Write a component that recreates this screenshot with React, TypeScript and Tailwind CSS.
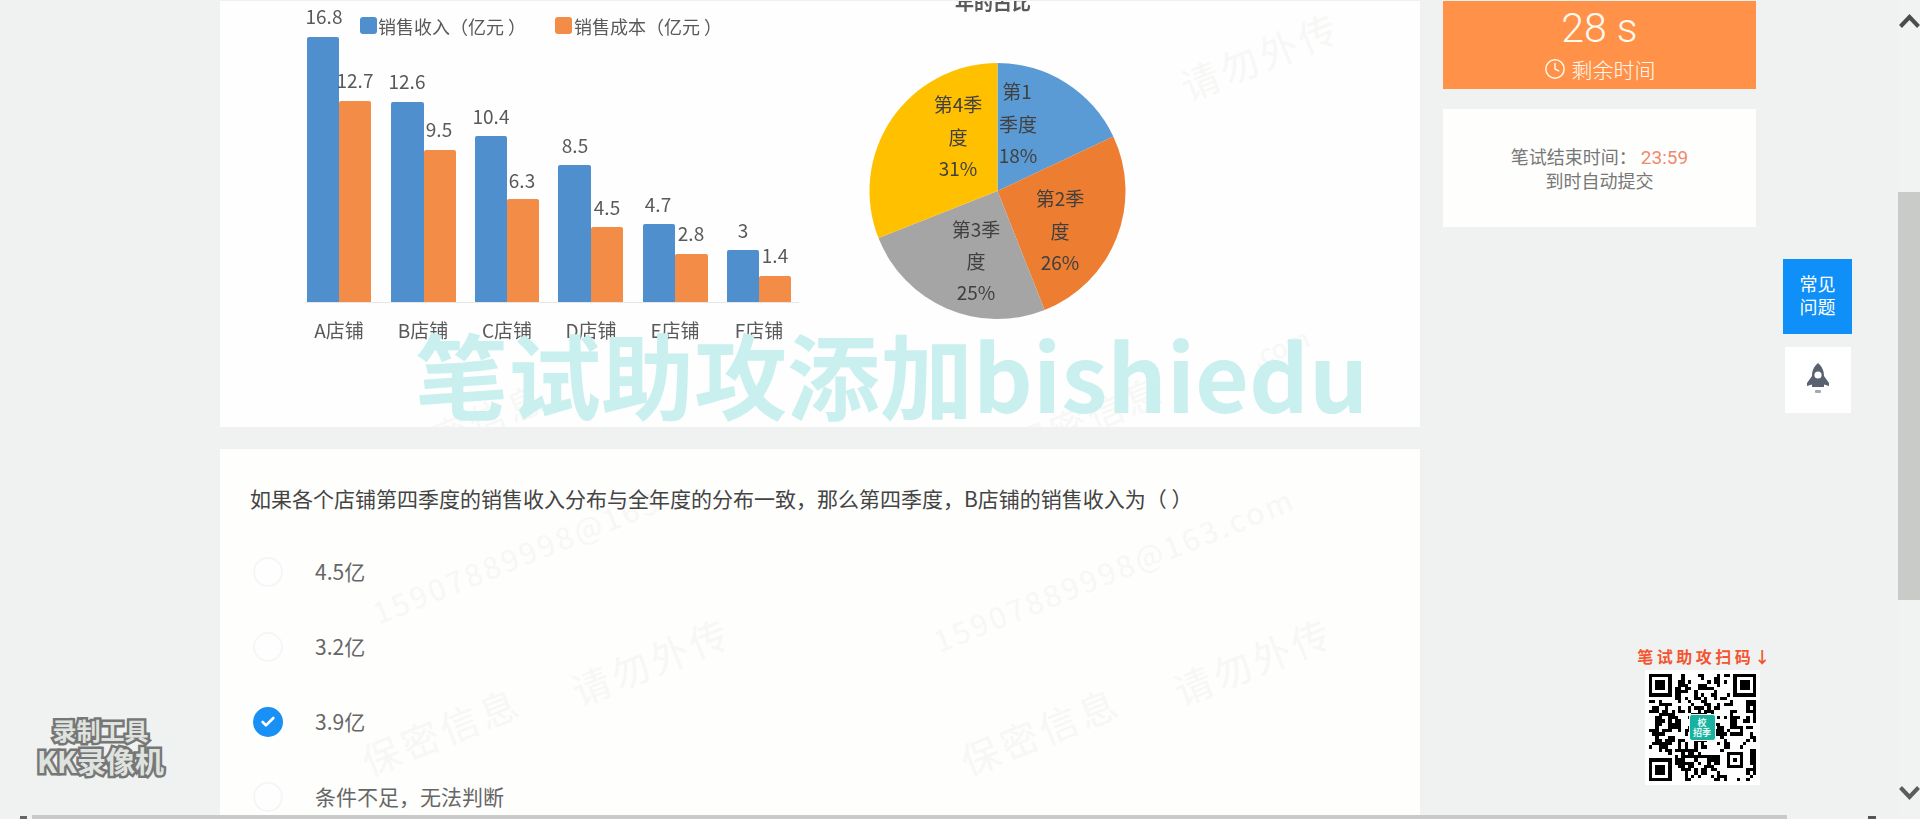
import React from "react";
import { Check, Clock } from "lucide-react";

const bars = [
  { x: 307, t: 37, x2: 339, t2: 101, e: 371, c: "A店铺", cx: 339 },
  { x: 391, t: 102, x2: 424, t2: 150, e: 456, c: "B店铺", cx: 423 },
  { x: 475, t: 136, x2: 507, t2: 199, e: 539, c: "C店铺", cx: 507 },
  { x: 558, t: 165, x2: 591, t2: 227, e: 623, c: "D店铺", cx: 591 },
  { x: 643, t: 224, x2: 675, t2: 254, e: 708, c: "E店铺", cx: 675 },
  { x: 727, t: 250, x2: 759, t2: 276, e: 791, c: "F店铺", cx: 759 },
];
const values: [string, number, number][] = [
  ["16.8", 324, 24], ["12.7", 355, 88], ["12.6", 407, 89], ["9.5", 439, 137],
  ["10.4", 491, 124], ["6.3", 522, 188], ["8.5", 575, 153], ["4.5", 607, 215],
  ["4.7", 658, 212], ["2.8", 691, 241], ["3", 743, 238], ["1.4", 775, 263],
];
const pieLabels: [string, number, number][] = [
  ["第1", 1017, 99], ["季度", 1018, 132], ["18%", 1018, 163],
  ["第4季", 958, 112], ["度", 958, 145], ["31%", 958, 176],
  ["第2季", 1060, 206], ["度", 1060, 239], ["26%", 1060, 270],
  ["第3季", 976, 237], ["度", 976, 269], ["25%", 976, 300],
];
const CX = 997.5, CY = 191, R = 128;
const pt = (f: number) => {
  const a = f * 2 * Math.PI;
  return `${CX + R * Math.sin(a)} ${CY - R * Math.cos(a)}`;
};
const slice = (a: number, b: number) =>
  `M${CX} ${CY} L${pt(a)} A${R} ${R} 0 ${b - a > 0.5 ? 1 : 0} 1 ${pt(b)} Z`;

function qrPath() {
  const n = 33;
  let seed = 48271;
  const rnd = () => {
    seed = (seed * 16807) % 2147483647;
    return seed / 2147483647;
  };
  const cells: boolean[][] = [];
  for (let y = 0; y < n; y++) {
    cells.push([]);
    for (let x = 0; x < n; x++) {
      const prevX = x > 0 ? cells[y][x - 1] : false;
      const prevY = y > 0 ? cells[y - 1][x] : false;
      cells[y].push(rnd() < 0.3 + (prevX ? 0.14 : 0) + (prevY ? 0.14 : 0));
    }
  }
  const box = (ox: number, oy: number, s: number) => {
    for (let y = -1; y <= s; y++)
      for (let x = -1; x <= s; x++) {
        const px = ox + x, py = oy + y;
        if (px < 0 || py < 0 || px >= n || py >= n) continue;
        const edge = x === 0 || y === 0 || x === s - 1 || y === s - 1;
        const inRange = x >= 0 && y >= 0 && x < s && y < s;
        const core = s === 7 ? x >= 2 && x <= 4 && y >= 2 && y <= 4 : x === 2 && y === 2;
        cells[py][px] = inRange && (edge || core);
      }
  };
  box(0, 0, 7);
  box(n - 7, 0, 7);
  box(0, n - 7, 7);
  box(n - 9, n - 9, 5);
  let d = "";
  cells.forEach((row, y) =>
    row.forEach((on, x) => {
      if (on) d += `M${x} ${y}h1v1h-1z`;
    })
  );
  return d;
}
const qr = qrPath();

const options = [
  { label: "4.5亿", on: false },
  { label: "3.2亿", on: false },
  { label: "3.9亿", on: true },
  { label: "条件不足，无法判断", on: false },
];

const wm = "absolute -translate-x-1/2 -translate-y-1/2 whitespace-nowrap text-[#f7f7f5] rotate-[-22deg]";

export default function App() {
  return (
    <div className="relative flex h-[819px] w-full overflow-hidden bg-[#f0f2f1] pl-[220px] pt-px font-['Noto_Sans_CJK_SC','Noto_Sans',sans-serif]">
      {/* main column */}
      <div className="flex w-[1200px] shrink-0 flex-col gap-[22px]">
        <div className="relative h-[426px] shrink-0 overflow-hidden bg-[#fefefe]">
          <span className={`${wm} left-[1040px] top-[54px] text-[38px] tracking-[4px]`}>请勿外传</span>
          <span className={`${wm} left-[868px] top-[415px] text-[36px] tracking-[4px]`}>保密信息</span>
          <span className={`${wm} left-[250px] top-[422px] text-[36px] tracking-[4px]`}>保密信息</span>
          <span className={`${wm} left-[1060px] top-[345px] text-[26px]`}>.com</span>
          <svg viewBox="220 1 1000 400" className="block h-[400px] w-[1000px] blur-[0.6px]" fontFamily="'Noto Sans CJK SC', sans-serif">
            <rect x="360" y="17" width="17" height="17" rx="3" fill="#4f8fce" />
            <text x="378" y="34" fontSize="18" fill="#595959">销售收入（亿元 ）</text>
            <rect x="555" y="17" width="17" height="17" rx="3" fill="#f28c47" />
            <text x="574" y="34" fontSize="18" fill="#595959">销售成本（亿元 ）</text>
            {bars.map((b) => (
              <g key={b.c}>
                <path d={`M${b.x} 302V${b.t + 2}q0 -2 2 -2H${b.x2 - 2}q2 0 2 2V302Z`} fill="#4f8fce" />
                <path d={`M${b.x2} 302V${b.t2 + 2}q0 -2 2 -2H${b.e - 2}q2 0 2 2V302Z`} fill="#f28c47" />
                <text x={b.cx} y="338" textAnchor="middle" fontSize="19" fill="#595959">{b.c}</text>
              </g>
            ))}
            <line x1="305" y1="302.5" x2="799" y2="302.5" stroke="#e6e6e6" />
            {values.map(([v, x, y]) => (
              <text key={v + x} x={x} y={y} textAnchor="middle" fontSize="19" fill="#595959">{v}</text>
            ))}
            <text x="993" y="10" textAnchor="middle" fontSize="19" fontWeight="700" fill="#595959">年的占比</text>
            <path d={slice(0, 0.18)} fill="#5b9bd5" />
            <path d={slice(0.18, 0.44)} fill="#ed7d31" />
            <path d={slice(0.44, 0.69)} fill="#a5a5a5" />
            <path d={slice(0.69, 1)} fill="#ffc000" />
            {pieLabels.map(([v, x, y]) => (
              <text key={v + x + y} x={x} y={y} textAnchor="middle" fontSize="19" fill="#404040">{v}</text>
            ))}
          </svg>
        </div>

        <div className="relative h-[400px] shrink-0 overflow-hidden bg-[#fefefd] pl-[30px] pt-[33px]">
          <span className={`${wm} left-[296px] top-[107px] text-[30px] tracking-[3px]`}>15907889998@163</span>
          <span className={`${wm} left-[894px] top-[120px] text-[30px] tracking-[3px]`}>15907889998@163.com</span>
          <span className={`${wm} left-[431px] top-[211px] text-[38px] tracking-[4px]`}>请勿外传</span>
          <span className={`${wm} left-[1033px] top-[211px] text-[38px] tracking-[4px]`}>请勿外传</span>
          <span className={`${wm} left-[221px] top-[281px] text-[38px] tracking-[4px]`}>保密信息</span>
          <span className={`${wm} left-[820px] top-[281px] text-[38px] tracking-[4px]`}>保密信息</span>
          <p className="relative h-[32px] text-[21px] leading-[32px] text-[#444]">
            如果各个店铺第四季度的销售收入分布与全年度的分布一致，那么第四季度，B店铺的销售收入为（ ）
          </p>
          <ul className="relative mt-[20px] flex flex-col pl-[3px]">
            {options.map((o) => (
              <li key={o.label} className="flex h-[75px] items-center gap-[32px]">
                {o.on ? (
                  <span className="flex h-[30px] w-[30px] items-center justify-center rounded-full bg-[#1890f5]">
                    <Check size={16} strokeWidth={4} color="#ffffff" />
                  </span>
                ) : (
                  <span className="h-[30px] w-[30px] rounded-full border-2 border-[#f5f6f5] bg-[#fefefe]" />
                )}
                <span className="text-[21px] text-[#666]">{o.label}</span>
              </li>
            ))}
          </ul>
        </div>
      </div>

      {/* sidebar */}
      <div className="ml-[23px] flex w-[313px] shrink-0 flex-col gap-[20px]">
        <div className="flex h-[88px] flex-col items-center bg-[#ff9149] text-[#fffaf0]">
          <div className="h-[52px] font-['Roboto',sans-serif] text-[41px] font-light leading-[54px]">28 s</div>
          <div className="flex h-[32px] items-center gap-[6px] text-[21px] font-light leading-[32px]">
            <Clock size={22} strokeWidth={1.6} />
            <span>剩余时间</span>
          </div>
        </div>
        <div className="flex h-[118px] flex-col items-center justify-center bg-[#fefefd] text-[18px] leading-[23px] text-[#777]">
          <div>
            笔试结束时间： <span className="font-['Roboto',sans-serif] text-[19px] text-[#ee8a70]">23:59</span>
          </div>
          <div>到时自动提交</div>
        </div>
      </div>

      {/* floating buttons */}
      <div className="ml-[27px] flex w-[69px] shrink-0 flex-col items-center gap-[13px] pt-[258px]">
        <div className="flex h-[75px] w-[69px] items-center justify-center bg-[#0e90f8] pb-[4px] text-center text-[18px] leading-[23px] text-white">
          常见
          <br />
          问题
        </div>
        <div className="flex h-[66px] w-[66px] items-center justify-center bg-white">
          <svg width="24" height="34" viewBox="0 0 24 34" fill="#5a6270">
            <path d="M12 0C7.5 3.5 6 8.5 6 13L1 20v3l5-1.5V24h12v-2.5l5 1.500v-3l-5-7C18 8.500 16.500 3.500 12 0Z" />
            <circle cx="12" cy="12" r="3.600" fill="#ffffff" />
            <rect x="9" y="27" width="6" height="3" rx="1" opacity="0.55" />
          </svg>
        </div>
      </div>

      {/* video overlay: large caption */}
      <div className="absolute left-[415px] top-[311px] whitespace-nowrap text-[93px] font-bold leading-[124px] text-[#c9f0ef]">
        笔试助攻添加bishiedu
      </div>

      {/* QR promo */}
      <div className="absolute left-[1638px] top-[646px] flex w-[128px] flex-col items-center">
        <div className="ml-[7px] h-[20px] whitespace-nowrap text-[16px] font-bold leading-[20px] tracking-[3.5px] text-[#f4552f]">笔试助攻扫码↓</div>
        <div className="relative mt-[4px] flex h-[115px] w-[115px] items-center justify-center bg-white">
          <svg viewBox="0 0 33 33" className="h-[107px] w-[107px]" shapeRendering="crispEdges">
            <path d={qr} fill="#000000" />
          </svg>
          <div className="absolute left-[44px] top-[44px] flex h-[27px] w-[27px] flex-col items-center justify-center rounded-[3px] border border-white bg-[#17b3a0] text-[9px] font-bold leading-[10px] text-[#eafaf7]">
            <span>校</span>
            <span>招季</span>
          </div>
        </div>
      </div>

      {/* recorder logo */}
      <div className="absolute left-[33px] top-[716px] flex w-[135px] flex-col items-center font-bold text-[#dfe3df] [-webkit-text-stroke:5px_#777777] [paint-order:stroke_fill]">
        <div className="h-[28px] text-[24px] leading-[28px]">录制工具</div>
        <div className="whitespace-nowrap text-[29px] leading-[32px]">KK录像机</div>
      </div>

      {/* vertical scrollbar */}
      <div className="absolute bottom-0 right-0 top-0 w-[22px] bg-[#f1f3f2]">
        <svg viewBox="0 0 22 16" className="absolute left-[1px] top-[13px] h-[16px] w-[22px]">
          <path d="M1.500 13.500 L10.500 4 L19.500 13.500" fill="none" stroke="#4a4d4c" strokeWidth="4" />
        </svg>
        <div className="absolute left-0 top-[192px] h-[408px] w-[22px] bg-[#c9cbc9]" />
        <svg viewBox="0 0 22 16" className="absolute left-[1px] top-[785px] h-[16px] w-[22px]">
          <path d="M1.500 2.500 L10.500 12 L19.500 2.500" fill="none" stroke="#5a5d5c" strokeWidth="4" />
        </svg>
      </div>

      {/* horizontal scrollbar */}
      <div className="absolute bottom-0 left-0 right-0 h-[4px] bg-[#f1f3f2]">
        <div className="absolute bottom-0 left-[32px] h-[4px] w-[1755px] bg-[#c9cbc9]" />
        <div className="absolute bottom-0 left-[20px] h-[3px] w-[7px] bg-[#666]" />
        <div className="absolute bottom-0 left-[1868px] h-[3px] w-[8px] bg-[#555]" />
      </div>
    </div>
  );
}
